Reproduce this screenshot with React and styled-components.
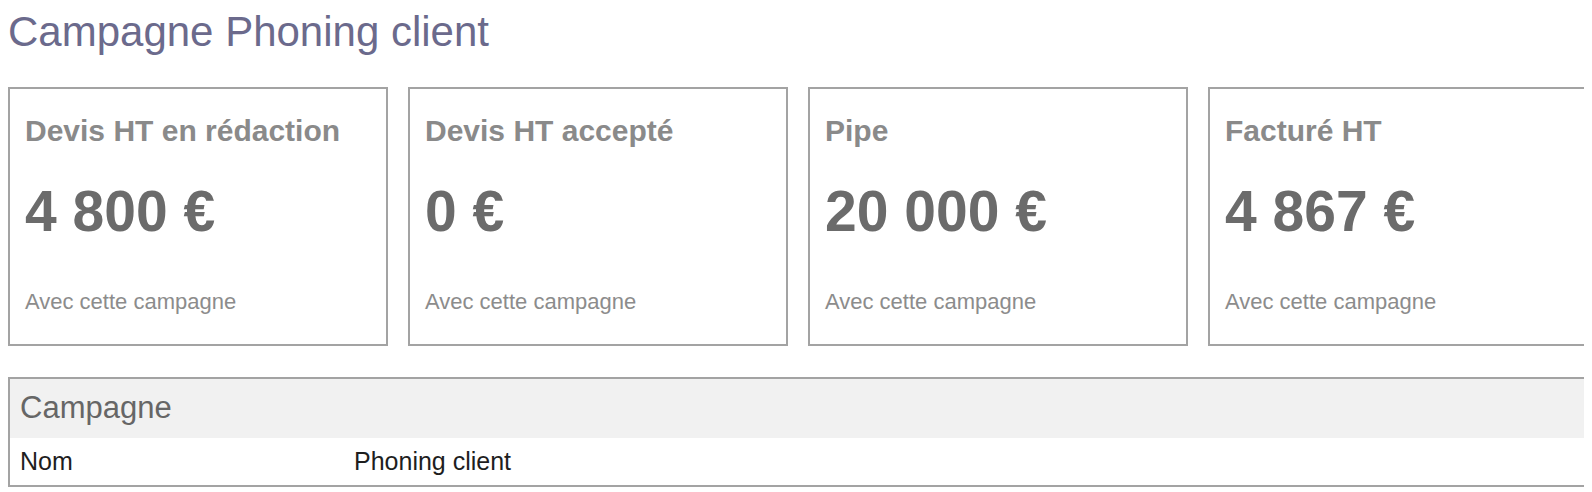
import React from 'react';
import styled, { createGlobalStyle } from 'styled-components';

const BORDER = '#a3a3a3';

const GlobalStyle = createGlobalStyle`
	html, body {
		overflow: hidden;
	}
	body {
		margin: 8px;
		background: #fff;
		font-family: "Liberation Sans", Arial, sans-serif;
	}
`

const PageTitle = styled.h1`
	margin: 0 0 34px;
	padding-top: 3px;
	font-size: 42px;
	line-height: 42px;
	font-weight: 400;
	color: #6b6a8c;
`

const CardRow = styled.div`
	display: grid;
	grid-template-columns: repeat(4, 380px);
	gap: 20px;
`

const Card = styled.div`
	box-sizing: border-box;
	border: 2px solid ${BORDER};
	padding: 27px 15px 31px;
	display: flex;
	flex-direction: column;
`

const CardLabel = styled.div`
	font-size: 30px;
	line-height: 30px;
	font-weight: 700;
	color: #8a8a8a;
`

const CardValue = styled.div`
	margin-top: 37px;
	font-size: 57px;
	line-height: 56px;
	font-weight: 700;
	color: #6b6b6b;
`

const CardNote = styled.div`
	margin-top: 52px;
	font-size: 22px;
	line-height: 22px;
	color: #8c8c8c;
`

const Table = styled.div`
	box-sizing: border-box;
	width: 1620px;
	margin-top: 31px;
	border: 2px solid ${BORDER};
`

const TableHeader = styled.div`
	height: 59px;
	line-height: 57px;
	padding: 0 10px;
	background: #f1f1f1;
	font-size: 31px;
	color: #666;
`

const TableRow = styled.div`
	display: grid;
	grid-template-columns: 334px 1fr;
	height: 47px;
	line-height: 47px;
	padding: 0 10px;
	font-size: 25px;
	color: #1e1e1e;
`

const stats = [
	{ label: 'Devis HT en rédaction', value: '4 800 €' },
	{ label: 'Devis HT accepté', value: '0 €' },
	{ label: 'Pipe', value: '20 000 €' },
	{ label: 'Facturé HT', value: '4 867 €' },
];

export default function App() {
	return <>
		<GlobalStyle />
		<PageTitle>Campagne Phoning client</PageTitle>
		<CardRow>
			{stats.map((s, i) =>
				<Card key={i}>
					<CardLabel>{s.label}</CardLabel>
					<CardValue>{s.value}</CardValue>
					<CardNote>Avec cette campagne</CardNote>
				</Card>
			)}
		</CardRow>
		<Table>
			<TableHeader>Campagne</TableHeader>
			<TableRow>
				<span>Nom</span>
				<span>Phoning client</span>
			</TableRow>
		</Table>
	</>
}
